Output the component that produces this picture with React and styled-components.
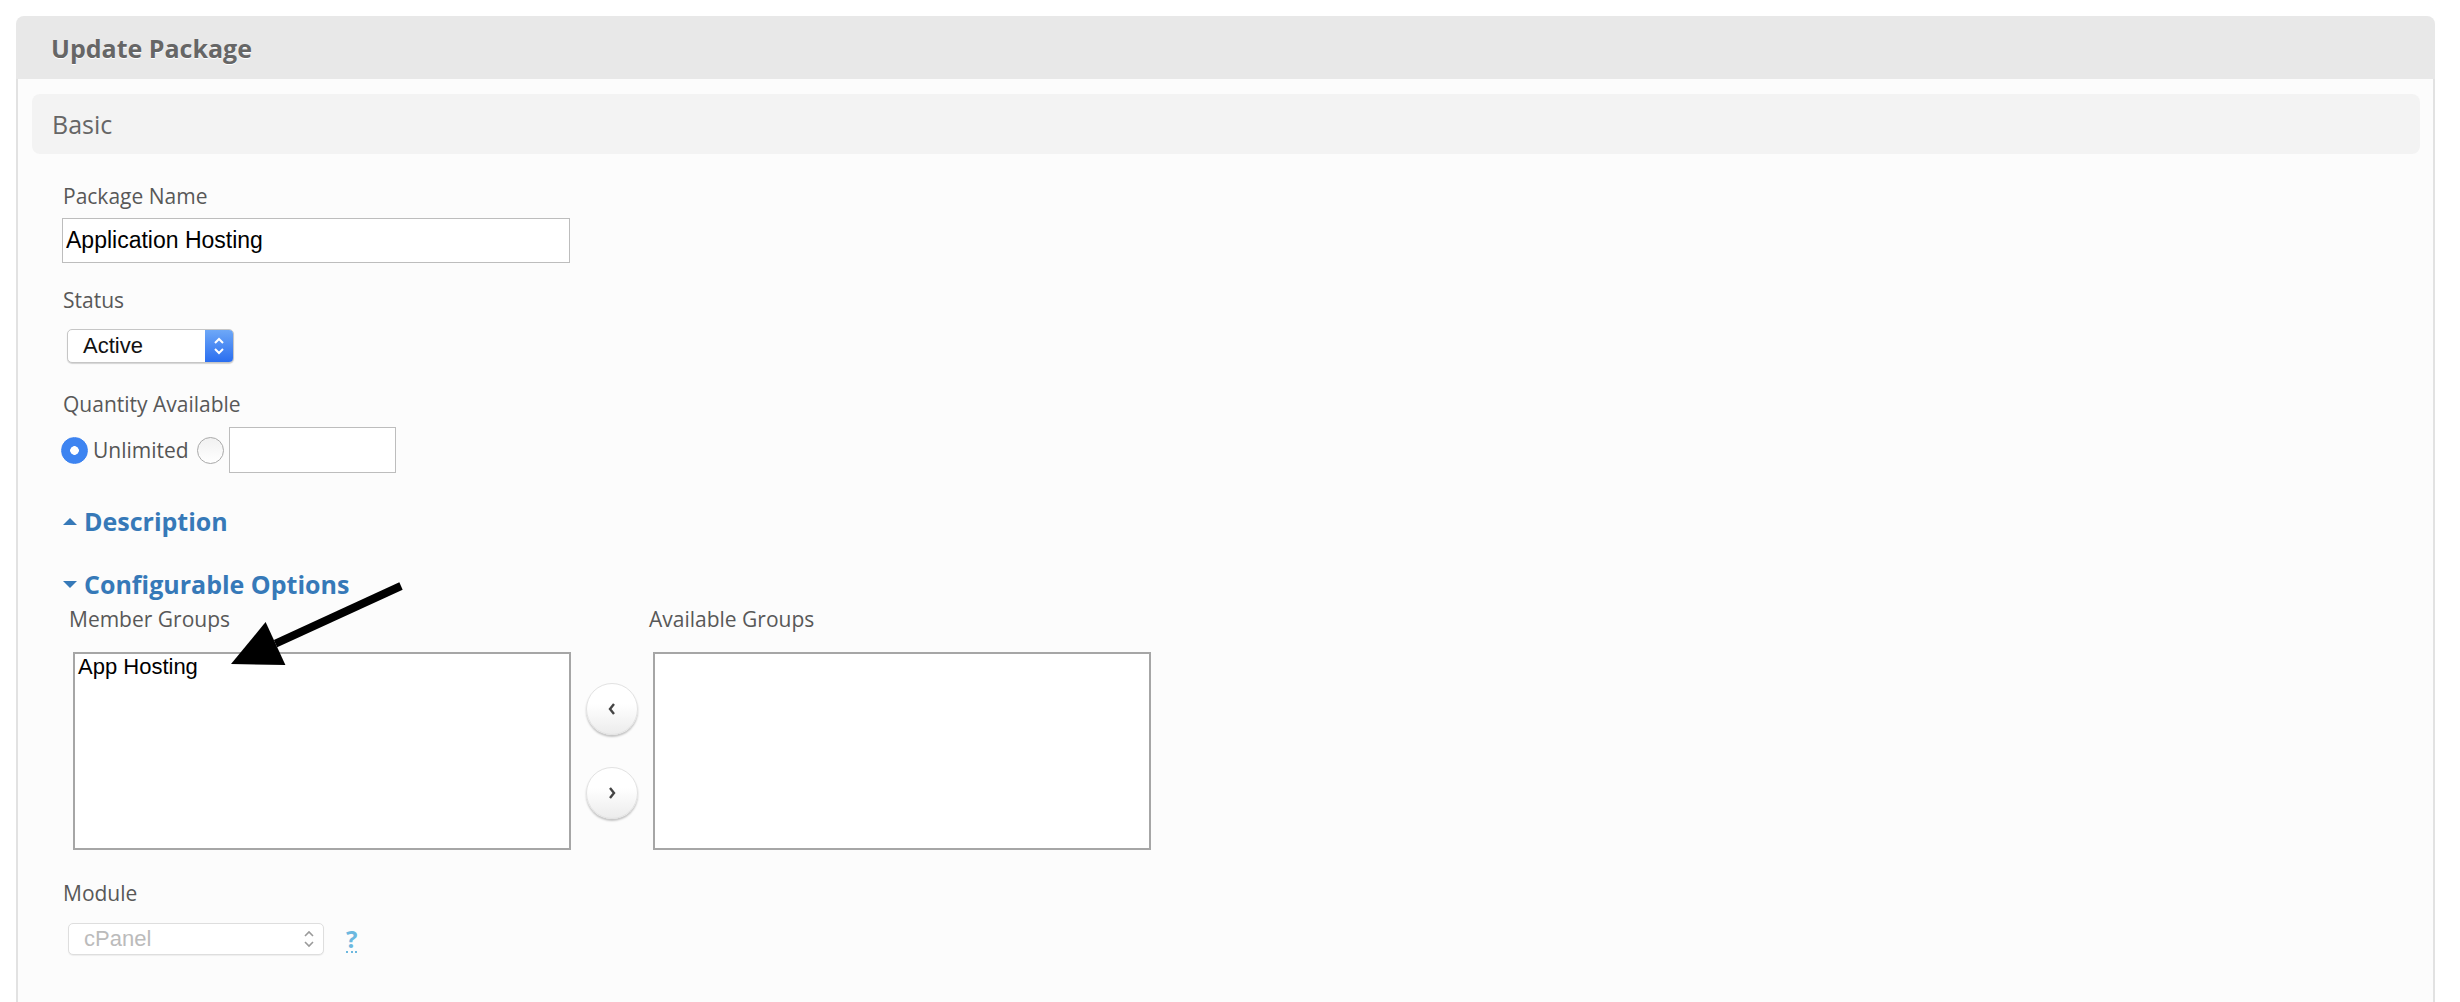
import React from 'react';
import styled, { createGlobalStyle } from 'styled-components';

const GlobalStyle = createGlobalStyle`
  html, body {
    margin: 0;
    padding: 0;
    background: #fff;
    overflow: hidden;
  }
  body {
    font-family: "Open Sans", "Noto Sans", sans-serif;
  }
`;

const Page = styled.div`
  position: relative;
  padding: 16px 25px 0 16px;
`;

const Panel = styled.section`
  display: flex;
  flex-direction: column;
  min-height: calc(100vh - 16px);
`;

const PanelHeader = styled.div`
  height: 63px;
  box-sizing: border-box;
  display: flex;
  align-items: center;
  padding-left: 35px;
  background: #e8e8e8;
  border-radius: 8px 8px 0 0;
  font-size: 25px;
  font-weight: 700;
  color: #666;
  text-shadow: 0 1px 0 #fff;
`;

const PanelBody = styled.div`
  flex: 1;
  padding: 15px 13px 0 14px;
  background: #fcfcfc;
  border-left: 2px solid #e2e2e2;
  border-right: 2px solid #e2e2e2;
`;

const SectionBar = styled.div`
  height: 60px;
  display: flex;
  align-items: center;
  padding-left: 20px;
  background: #f3f3f3;
  border-radius: 8px;
  font-size: 25px;
  color: #666;
`;

const Form = styled.div`
  display: flex;
  flex-direction: column;
  align-items: flex-start;
  padding-left: 31px;
`;

const Label = styled.div`
  margin-top: ${(p) => p.$gap || 0}px;
  font-size: 21px;
  line-height: 28px;
  color: #585858;
`;

const TextInput = styled.input`
  box-sizing: border-box;
  width: ${(p) => p.$width}px;
  height: ${(p) => p.$height}px;
  margin: ${(p) => p.$margin || '0'};
  padding: 0 3px;
  border: 1px solid #bdbdbd;
  border-radius: 0;
  background: #fff;
  font-family: "Liberation Sans", Arial, sans-serif;
  font-size: 23px;
  color: #000;
  outline: none;
`;

const Select = styled.div`
  box-sizing: border-box;
  display: flex;
  width: ${(p) => p.$width}px;
  height: ${(p) => p.$height}px;
  margin-top: ${(p) => p.$gap || 0}px;
  margin-left: ${(p) => p.$indent || 0}px;
  background: #fff;
  border: 1px solid ${(p) => (p.$disabled ? '#dedede' : '#c6c6c6')};
  border-radius: 5px;
  box-shadow: 0 1px 1px rgba(0, 0, 0, ${(p) => (p.$disabled ? 0.06 : 0.16)});
  overflow: hidden;
`;

const SelectValue = styled.div`
  flex: 1;
  display: flex;
  align-items: center;
  padding-left: 15px;
  font-family: "Liberation Sans", Arial, sans-serif;
  font-size: 22px;
  color: ${(p) => (p.$disabled ? '#bbb' : '#111')};
`;

const SelectArrows = styled.div`
  width: 28px;
  display: flex;
  align-items: center;
  justify-content: center;
  background: ${(p) =>
    p.$disabled ? 'transparent' : 'linear-gradient(#6ea8f7, #2a6ef0)'};
  color: ${(p) => (p.$disabled ? '#9a9a9a' : '#fff')};
`;

const RadioRow = styled.div`
  display: flex;
  align-items: center;
  height: 46px;
  margin-top: 9px;
  margin-left: -2px;
`;

const Radio = styled.input.attrs({ type: 'radio' })`
  appearance: none;
  box-sizing: border-box;
  width: 27px;
  height: 27px;
  margin: 0;
  border-radius: 50%;
  border: 1px solid ${(p) => (p.checked ? '#3b82f0' : '#a9a9a9')};
  background: ${(p) =>
    p.checked
      ? 'radial-gradient(circle, #fff 0 4px, #3d84f1 4.6px)'
      : 'linear-gradient(#f1f1f1, #fff)'};
`;

const RadioText = styled.span`
  margin: 0 8px 0 5px;
  font-size: 21px;
  color: #555;
`;

const Toggle = styled.div`
  display: flex;
  align-items: center;
  gap: 7px;
  margin-top: ${(p) => p.$gap}px;
  font-size: 25px;
  line-height: 34px;
  font-weight: 700;
  color: #3679b8;
`;

const Caret = styled.span`
  width: 0;
  height: 0;
  border-left: 7px solid transparent;
  border-right: 7px solid transparent;
  ${(p) =>
    p.$up ? 'border-bottom: 7px solid #3679b8;' : 'border-top: 7px solid #3679b8;'}
`;

const Groups = styled.div`
  display: flex;
  margin-top: 4px;
  padding-left: 6px;
`;

const GroupColumn = styled.div`
  display: flex;
  flex-direction: column;
`;

const ListBox = styled.div`
  box-sizing: border-box;
  width: 498px;
  height: 198px;
  margin: 19px 0 0 4px;
  padding: 0 3px;
  background: #fff;
  border: 2px solid #a6a6a6;
  font-family: "Liberation Sans", Arial, sans-serif;
  font-size: 22px;
  line-height: 26px;
  color: #000;
`;

const MoveButtons = styled.div`
  width: 78px;
  display: flex;
  flex-direction: column;
  align-items: center;
  gap: 32px;
  padding: 78px 0 0 4px;
  box-sizing: border-box;
`;

const RoundButton = styled.button`
  width: 52px;
  height: 52px;
  padding: 0;
  display: flex;
  align-items: center;
  justify-content: center;
  border-radius: 50%;
  border: 1px solid #e2e2e2;
  background: linear-gradient(#fff 40%, #ececec);
  box-shadow: 0 2px 2px rgba(0, 0, 0, 0.22);
  color: #444;
`;

const ModuleRow = styled.div`
  display: flex;
  align-items: center;
  gap: 22px;
  margin-top: 16px;
`;

const HelpLink = styled.span`
  font-size: 24px;
  font-weight: 700;
  line-height: 24px;
  color: #6cb8df;
  border-bottom: 2px dotted #6cb8df;
  margin-top: 2px;
`;

const Annotation = styled.svg`
  position: absolute;
  left: 220px;
  top: 575px;
  pointer-events: none;
`;

const UpDown = ({ width = 2 }) => (
  <svg width="12" height="20" viewBox="0 0 12 20">
    <polyline points="2,7 6,3 10,7" fill="none" stroke="currentColor" strokeWidth={width} />
    <polyline points="2,13 6,17 10,13" fill="none" stroke="currentColor" strokeWidth={width} />
  </svg>
);

const Chevron = ({ left }) => (
  <svg width="10" height="14" viewBox="0 0 10 14">
    <polyline
      points={left ? '7,2 3,7 7,12' : '3,2 7,7 3,12'}
      fill="none"
      stroke="currentColor"
      strokeWidth="2.4"
    />
  </svg>
);

const App = () => (
  <Page>
    <GlobalStyle />
    <Panel>
      <PanelHeader>Update Package</PanelHeader>
      <PanelBody>
        <SectionBar>Basic</SectionBar>
        <Form>
          <Label $gap={28}>Package Name</Label>
          <TextInput
            $width={508}
            $height={45}
            $margin="8px 0 0 -1px"
            defaultValue="Application Hosting"
          />

          <Label $gap={23}>Status</Label>
          <Select $width={167} $height={34} $gap={15} $indent={4}>
            <SelectValue>Active</SelectValue>
            <SelectArrows>
              <UpDown />
            </SelectArrows>
          </Select>

          <Label $gap={27}>Quantity Available</Label>
          <RadioRow>
            <Radio name="qty" checked readOnly />
            <RadioText>Unlimited</RadioText>
            <Radio name="qty" checked={false} readOnly />
            <TextInput $width={167} $height={46} $margin="0 0 0 5px" />
          </RadioRow>

          <Toggle $gap={31}>
            <Caret $up />
            Description
          </Toggle>
          <Toggle $gap={29}>
            <Caret />
            Configurable Options
          </Toggle>

          <Groups>
            <GroupColumn>
              <Label>Member Groups</Label>
              <ListBox>App Hosting</ListBox>
            </GroupColumn>
            <MoveButtons>
              <RoundButton>
                <Chevron left />
              </RoundButton>
              <RoundButton>
                <Chevron />
              </RoundButton>
            </MoveButtons>
            <GroupColumn>
              <Label>Available Groups</Label>
              <ListBox />
            </GroupColumn>
          </Groups>

          <Label $gap={29}>Module</Label>
          <ModuleRow>
            <Select $width={256} $height={32} $indent={5} $disabled>
              <SelectValue $disabled>cPanel</SelectValue>
              <SelectArrows $disabled>
                <UpDown width={1.6} />
              </SelectArrows>
            </Select>
            <HelpLink>?</HelpLink>
          </ModuleRow>
        </Form>
      </PanelBody>
    </Panel>

    <Annotation width="190" height="100" viewBox="0 0 190 100">
      <line x1="181" y1="11" x2="55.5" y2="68.6" stroke="#000" strokeWidth="8" />
      <polygon points="11,89 65.4,90.1 45.6,47.1" fill="#000" />
    </Annotation>
  </Page>
);

export default App;
